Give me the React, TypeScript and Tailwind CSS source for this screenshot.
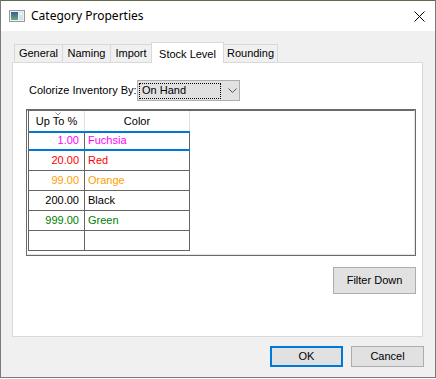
import React from "react";

const rows = [
  { v: "1.00", c: "Fuchsia", col: "text-[#ff00ff]" },
  { v: "20.00", c: "Red", col: "text-[#ff0000]" },
  { v: "99.00", c: "Orange", col: "text-[#ffa000]" },
  { v: "200.00", c: "Black", col: "text-black" },
  { v: "999.00", c: "Green", col: "text-[#008000]" },
  { v: "", c: "", col: "text-black" },
];

function TitleIcon() {
  return (
    <svg width="16" height="12" viewBox="0 0 16 12">
      <defs>
        <linearGradient id="g1" x1="0" y1="0" x2="0" y2="1">
          <stop offset="0" stopColor="#2f5f8f" />
          <stop offset="1" stopColor="#6aa97a" />
        </linearGradient>
      </defs>
      <rect x="0.5" y="0.5" width="15" height="11" fill="#eef1f1" stroke="#9a9a9a" />
      <rect x="2" y="2" width="7" height="8" fill="url(#g1)" />
      <rect x="10" y="2" width="4" height="8" fill="#d6e2e6" />
      <rect x="11" y="3" width="2" height="2" fill="#ffffff" />
    </svg>
  );
}

export default function App() {
  const tabBase =
    "flex items-center justify-center border-t border-l border-r border-[#d9d9d9] -ml-px";
  return (
    <div
      className="w-[436px] h-[379px] bg-white overflow-hidden text-[11px] text-black"
      style={{ fontFamily: '"Liberation Sans", Arial, sans-serif' }}
    >
      <div className="w-[436px] h-[378px] flex flex-col border-x border-b border-[#7a7a7a] border-t border-t-[#5f6a4c] bg-[#f0f0f0]">
        {/* Title bar */}
        <div className="h-[30px] bg-white flex items-center pl-[8px] shrink-0">
          <TitleIcon />
          <span
            className="ml-[6px] text-[12px] text-black"
            style={{ fontFamily: '"Noto Sans", "Open Sans", sans-serif' }}
          >
            Category Properties
          </span>
          <svg className="ml-auto mr-[10px]" width="11" height="11" viewBox="0 0 11 11">
            <path d="M0.5 0.5 L10.5 10.5 M10.5 0.5 L0.5 10.5" stroke="#000" strokeWidth="1" />
          </svg>
        </div>

        {/* Tabs */}
        <div className="mt-[11px] ml-[11px] h-[20px] flex items-end pl-[3px]">
          <div className={`${tabBase} w-[49px] h-[18px]`}>General</div>
          <div className={`${tabBase} w-[49px] h-[18px]`}>Naming</div>
          <div className={`${tabBase} w-[42px] h-[18px]`}>Import</div>
          <div className="relative z-10 -ml-px w-[73px] h-[21px] -mb-px bg-white border-t border-l border-r border-[#d9d9d9] flex items-start justify-center pt-[3px]">
            Stock Level
          </div>
          <div className={`${tabBase} w-[55px] h-[18px]`}>Rounding</div>
        </div>

        {/* Panel */}
        <div className="ml-[11px] w-[411px] h-[275px] bg-white border border-[#d9d9d9] flex flex-col">
          <div className="mt-[17px] ml-[16px] flex items-center">
            <span className="w-[108px]">Colorize Inventory By:</span>
            <div className="w-[103px] h-[21px] bg-[#e1e1e1] border border-[#adadad] flex items-center pl-[1px]">
              <div className="w-[82px] h-[16px] border border-dotted border-black flex items-center pl-[2px]">
                On Hand
              </div>
              <svg className="ml-[7px]" width="9" height="5" viewBox="0 0 9 5">
                <path d="M0.5 0.5 L4.5 4.5 L8.5 0.5" fill="none" stroke="#555" strokeWidth="1" />
              </svg>
            </div>
          </div>

          {/* Grid */}
          <div className="mt-[8px] ml-[13px] w-[390px] h-[147px] border border-[#6a6a6a]">
            <div className="w-full h-full border-t border-l border-t-[#6a6a6a] border-l-white border-b border-r border-b-[#e3e3e3] border-r-[#e3e3e3]">
              <div className="w-[162px] border-l border-[#646464]">
                {/* header */}
                <div className="flex h-[20px]">
                  <div className="relative w-[56px] border-r border-[#e0e0e0] flex items-center justify-center">
                    <span>Up To %</span>
                    <svg className="absolute left-[26px] top-[1px]" width="6" height="4" viewBox="0 0 6 4">
                      <path d="M0.5 0.5 L3 3 L5.5 0.5" fill="none" stroke="#8a8a8a" strokeWidth="1" />
                    </svg>
                  </div>
                  <div className="w-[105px] border-r border-[#e0e0e0] flex items-center justify-center">
                    Color
                  </div>
                </div>
                {rows.map((r, i) => (
                  <div key={i} className="relative flex h-[20px] border-b border-[#646464]">
                    <div className={`w-[56px] border-r border-[#646464] flex items-center justify-end pr-[5px] ${r.col}`}>
                      {r.v}
                    </div>
                    <div className={`w-[105px] border-r border-[#646464] flex items-center pl-[3px] ${r.col}`}>
                      {r.c}
                    </div>
                    {i === 0 && (
                      <div className="absolute left-0 right-0 top-0 -bottom-px border-y-2 border-[#0078d7]" />
                    )}
                  </div>
                ))}
              </div>
            </div>
          </div>

          <div className="ml-[13px] w-[390px] mt-[11px] flex justify-end">
            <div className="w-[83px] h-[27px] bg-[#e1e1e1] border border-[#adadad] flex items-center justify-center">
              Filter Down
            </div>
          </div>
        </div>

        {/* Bottom buttons */}
        <div className="mt-[9px] mr-[11px] flex justify-end gap-[8px]">
          <div className="w-[73px] h-[21px] bg-[#e1e1e1] border-2 border-[#0078d7] flex items-center justify-center">
            OK
          </div>
          <div className="w-[73px] h-[21px] bg-[#e1e1e1] border border-[#adadad] flex items-center justify-center">
            Cancel
          </div>
        </div>
      </div>
    </div>
  );
}
